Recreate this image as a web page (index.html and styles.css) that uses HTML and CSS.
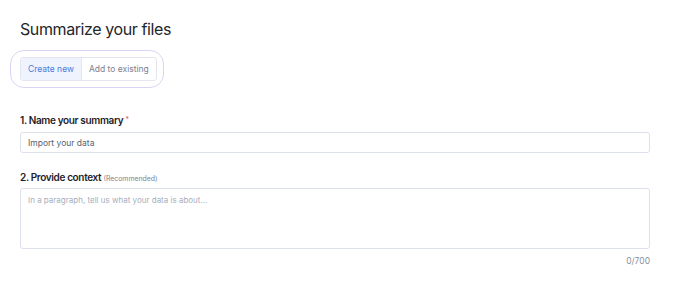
FILE: index.html
```html
<!DOCTYPE html>
<html>
<head>
<meta charset="utf-8">
<link rel="stylesheet" href="styles.css">
</head>
<body>
<div class="page">
  <h1 class="title">Summarize your files</h1>
  <div class="ring">
    <div class="toggle">
      <span class="seg seg-active">Create new</span>
      <span class="seg">Add to existing</span>
    </div>
  </div>
  <div class="field field-name">
    <div class="label">1. Name your summary <span class="req">*</span></div>
    <div class="input">Import your data</div>
  </div>
  <div class="field field-context">
    <div class="label">2. Provide context <span class="hint">(Recommended)</span></div>
    <div class="textarea">In a paragraph, tell us what your data is about...</div>
    <div class="count">0/700</div>
  </div>
</div>
</body>
</html>
```
FILE: styles.css
```css
html, body {
  margin: 0;
  padding: 0;
  background: #ffffff;
}
body {
  font-family: Inter, "Noto Sans", "Liberation Sans", sans-serif;
  color: #1e2126;
}
.page {
  width: 630px;
  padding: 19px 0 0 20px;
}
.title {
  margin: 0;
  font-size: 16px;
  letter-spacing: -0.4px;
  line-height: 20px;
  font-weight: 400;
  color: #23262b;
}
.ring {
  display: inline-block;
  margin: 11px 0 0 -10px;
  padding: 6px 6px 6px 9px;
  border: 1px solid #d9d4f4;
  border-radius: 14px;
}
.toggle {
  display: flex;
  border: 1px solid #e3e6ee;
  border-radius: 3px;
  height: 22px;
  overflow: hidden;
}
.seg {
  display: flex;
  align-items: center;
  padding: 0 7px;
  font-size: 8.5px;
  color: #7b818e;
}
.seg-active {
  background: #eef3fd;
  color: #4a7ae0;
  border-right: 1px solid #e3e6ee;
}
.field-name {
  margin-top: 25px;
}
.field-context {
  margin-top: 17px;
}
.label {
  height: 14px;
  font-size: 10px;
  letter-spacing: -0.35px;
  line-height: 14px;
  font-weight: 600;
  color: #1f2227;
}
.req {
  color: #e0566b;
  font-size: 7px;
  vertical-align: top;
  font-weight: 400;
  letter-spacing: 0;
}
.hint {
  font-size: 6.9px;
  letter-spacing: 0;
  font-weight: 400;
  color: #7d8390;
}
.input {
  margin-top: 5px;
  height: 19px;
  border: 1px solid #dde1ee;
  border-radius: 3px;
  padding: 0 7px;
  display: flex;
  align-items: center;
  font-size: 8.5px;
  color: #5a606c;
}
.textarea {
  margin-top: 4px;
  height: 49px;
  border: 1px solid #dde1ee;
  border-radius: 3px;
  padding: 5px 7px;
  font-size: 8px;
  line-height: 12px;
  color: #a8aebb;
}
.count {
  margin-top: 6px;
  text-align: right;
  font-size: 8.5px;
  line-height: 12px;
  color: #8a909c;
}
```
